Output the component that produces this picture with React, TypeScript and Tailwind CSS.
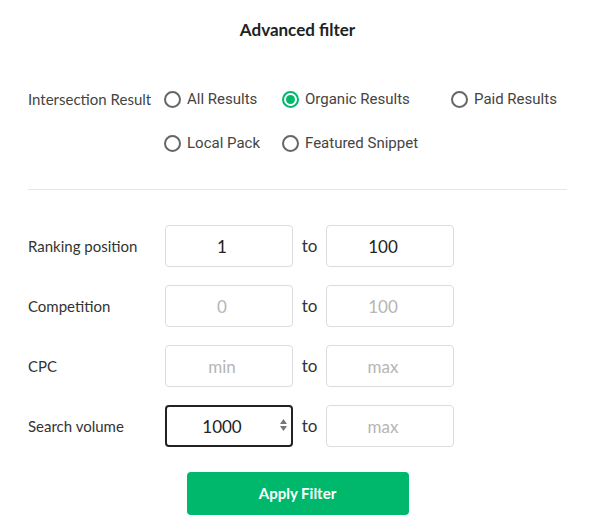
import { useState } from 'react'

const options = [
    { id: 'all', label: 'All Results' },
    { id: 'organic', label: 'Organic Results' },
    { id: 'paid', label: 'Paid Results' },
    { id: 'local', label: 'Local Pack' },
    { id: 'snippet', label: 'Featured Snippet' },
]

interface RangeRowProps {
    label: string
    from: string
    to: string
    fromPlaceholder?: string
    toPlaceholder?: string
    focused?: boolean
}

function Radio({ label, checked, onClick }: { label: string; checked: boolean; onClick: () => void }) {
    return (
        <button type="button" onClick={onClick} className="flex h-5 items-center gap-[6px] text-left">
            {checked ? (
                <span className="flex h-[17px] w-[17px] items-center justify-center rounded-full border-2 border-[#00b86b]">
                    <span className="h-[9px] w-[9px] rounded-full bg-[#00b86b]" />
                </span>
            ) : (
                <span className="h-[17px] w-[17px] rounded-full border-2 border-[#666]" />
            )}
            <span className="font-['Roboto',sans-serif] text-[15px] text-[#444]">{label}</span>
        </button>
    )
}

function RangeRow({ label, from, to, fromPlaceholder, toPlaceholder, focused }: RangeRowProps) {
    const [a, setA] = useState(from)
    const [b, setB] = useState(to)
    return (
        <div className="flex h-[42px] items-center">
            <span className="w-[137px] text-[15px] text-[#333]">{label}</span>
            <div className="relative w-[128px]">
                <input
                    value={a}
                    onChange={(event) => setA(event.target.value)}
                    placeholder={fromPlaceholder}
                    className={
                        focused
                            ? 'h-[42px] w-full rounded-[4px] border-2 border-[#222] bg-white pr-[14px] text-center text-[17px] text-[#222] outline-none'
                            : 'h-[42px] w-full rounded-[4px] border border-[#dcdcdc] bg-white pr-[14px] text-center text-[17px] text-[#222] outline-none placeholder:text-[#b5b5b5]'
                    }
                />
                {focused && (
                    <span className="absolute right-[6px] top-[14px] flex flex-col items-center gap-[2px]">
                        <svg width="7" height="5" viewBox="0 0 7 5">
                            <path d="M3.5 0 L7 5 L0 5 Z" fill="#777" />
                        </svg>
                        <svg width="7" height="5" viewBox="0 0 7 5">
                            <path d="M0 0 L7 0 L3.5 5 Z" fill="#777" />
                        </svg>
                    </span>
                )}
            </div>
            <span className="w-[33px] text-center text-[17px] text-[#333]">to</span>
            <input
                value={b}
                onChange={(event) => setB(event.target.value)}
                placeholder={toPlaceholder}
                className="h-[42px] w-[128px] rounded-[4px] border border-[#dcdcdc] bg-white pr-[14px] text-center text-[17px] text-[#222] outline-none placeholder:text-[#b5b5b5]"
            />
        </div>
    )
}

export default function App() {
    const [selected, setSelected] = useState('organic')

    return (
        <div className="min-h-[532px] w-[602px] bg-white font-['Lato',sans-serif]">
            <div className="ml-[28px] w-[539px] pt-[18px]">
                <h1 className="text-center text-[17px] font-bold leading-6 text-[#222]">Advanced filter</h1>

                <div className="mt-[47px] flex">
                    <span className="w-[136px] text-[15px] leading-5 text-[#444]">Intersection Result</span>
                    <div className="grid grid-cols-[118px_169px_auto] gap-y-[24px]">
                        {options.map((option) => (
                            <Radio key={option.id} label={option.label} checked={selected === option.id} onClick={() => setSelected(option.id)} />
                        ))}
                    </div>
                </div>

                <div className="mt-[36px] h-px bg-[#e6e6e6]" />

                <div className="mt-[35px] flex flex-col gap-[18px]">
                    <RangeRow label="Ranking position" from="1" to="100" />
                    <RangeRow label="Competition" from="" to="" fromPlaceholder="0" toPlaceholder="100" />
                    <RangeRow label="CPC" from="" to="" fromPlaceholder="min" toPlaceholder="max" />
                    <RangeRow label="Search volume" from="1000" to="" toPlaceholder="max" focused />
                </div>

                <div className="mt-[25px] flex justify-center">
                    <button type="button" className="h-[43px] w-[222px] rounded-[4px] bg-[#00b86b] text-[15px] font-bold text-white">
                        Apply Filter
                    </button>
                </div>
            </div>
        </div>
    )
}
